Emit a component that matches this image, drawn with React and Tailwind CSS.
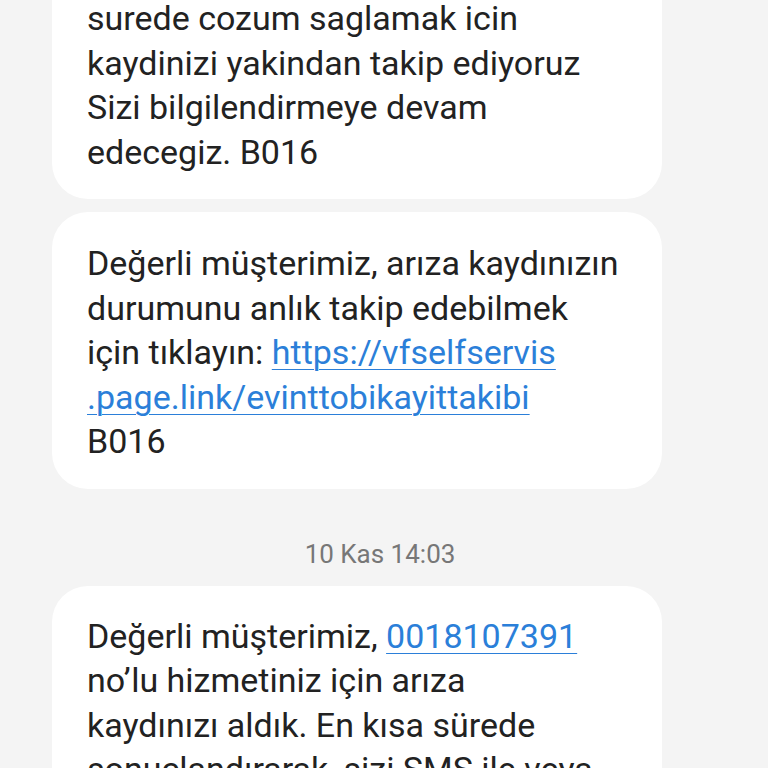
export default function App() {
  const link = 'text-[#2b7fd9] underline decoration-1 underline-offset-[5px]'
  return (
    <div className="min-h-[768px] h-[768px] overflow-hidden bg-[#f4f4f4] font-['Roboto',sans-serif] text-[34px] leading-[44.5px] text-[#222]">
      <div className="flex flex-col pl-[52px] pr-[106px]">
        <div className="-mt-[35px] rounded-[36px] bg-white pl-[35px] pr-4 pt-[31px] pb-[25px]">
          surede cozum saglamak icin<br />
          kaydinizi yakindan takip ediyoruz<br />
          Sizi bilgilendirmeye devam<br />
          edecegiz. B016
        </div>
        <div className="mt-[13px] rounded-[36px] bg-white pl-[35px] pr-4 pt-[29px] pb-[25px]">
          Değerli müşterimiz, arıza kaydınızın<br />
          durumunu anlık takip edebilmek<br />
          için tıklayın: <span className={link}>https://vfselfservis</span><br />
          <span className={link}>.page.link/evinttobikayittakibi</span><br />
          B016
        </div>
        <div className="flex justify-center pl-[46px] pt-[47px] pb-[14px] text-[26px] leading-[36px] text-[#777]">
          10 Kas 14:03
        </div>
        <div className="rounded-[36px] bg-white pl-[35px] pr-4 pt-[28px] pb-[25px]">
          Değerli müşterimiz, <span className={link}>0018107391</span><br />
          no’lu hizmetiniz için arıza<br />
          kaydınızı aldık. En kısa sürede<br />
          sonuçlandırarak, sizi SMS ile veya
        </div>
      </div>
    </div>
  )
}
